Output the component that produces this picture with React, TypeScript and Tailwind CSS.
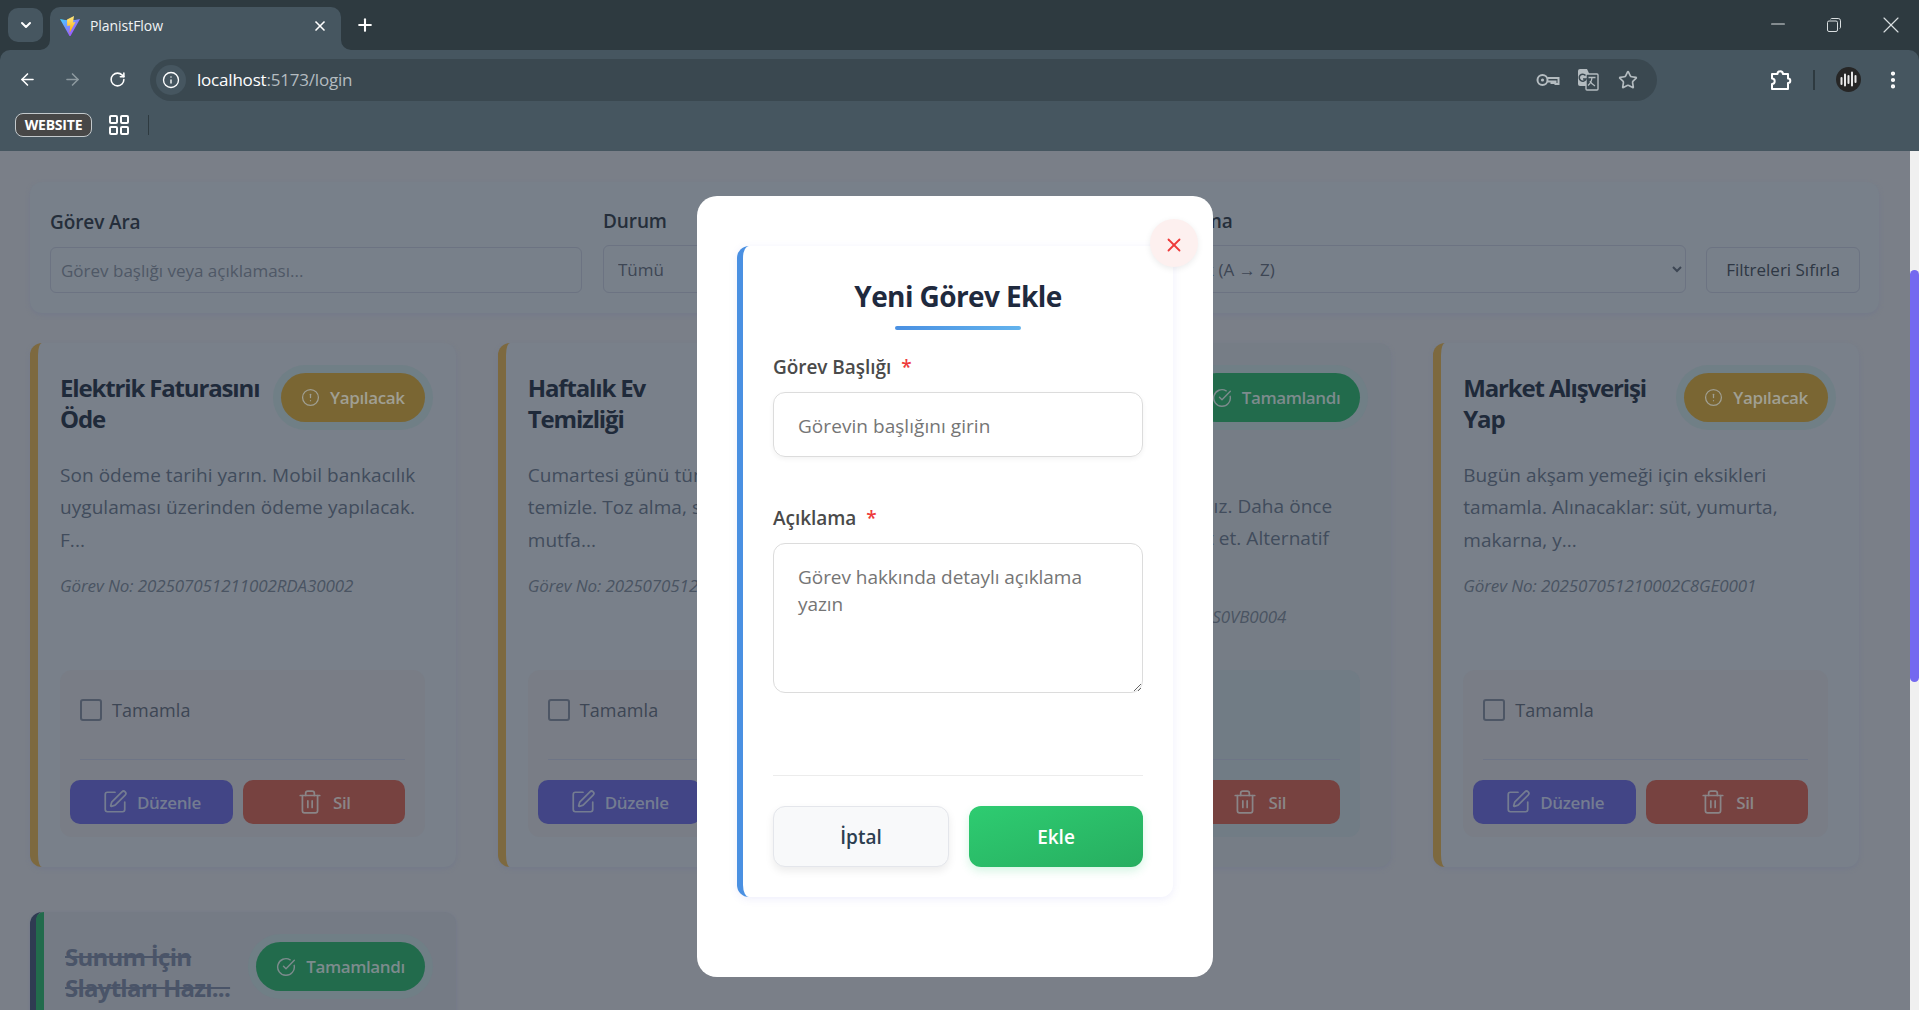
import {
  ArrowLeft,
  ArrowRight,
  ChevronDown,
  CircleAlert,
  CircleCheckBig,
  EllipsisVertical,
  Info,
  LayoutGrid,
  Minus,
  Plus,
  RotateCw,
  SquarePen,
  Star,
  Trash2,
  X,
} from "lucide-react";
import type { ReactNode } from "react";

type Task = {
  title: ReactNode;
  desc: ReactNode;
  no: string;
  done?: boolean;
};

const tasks: Task[] = [
  {
    title: (
      <>
        Elektrik Faturasını
        <br />
        Öde
      </>
    ),
    desc: (
      <>
        Son ödeme tarihi yarın. Mobil bankacılık
        <br />
        uygulaması üzerinden ödeme yapılacak.
        <br />
        F...
      </>
    ),
    no: "Görev No: 202507051211002RDA30002",
  },
  {
    title: (
      <>
        Haftalık Ev
        <br />
        Temizliği
      </>
    ),
    desc: (
      <>
        Cumartesi günü tüm evi baştan sona
        <br />
        temizle. Toz alma, süpürme ve
        <br />
        mutfa...
      </>
    ),
    no: "Görev No: 202507051211002KHT20003",
  },
  {
    title: (
      <>
        Diş Randevusu
        <br />
        İçin Klinik
        <br />
        Aranacak
      </>
    ),
    desc: (
      <>
        Randevu günü onaylayınız. Daha önce
        <br />
        Kliniği arayarak gün teyit et. Alternatif
        <br />
        gün...
      </>
    ),
    no: "Görev No: 202507051211002S0VB0004",
    done: true,
  },
  {
    title: (
      <>
        Market Alışverişi
        <br />
        Yap
      </>
    ),
    desc: (
      <>
        Bugün akşam yemeği için eksikleri
        <br />
        tamamla. Alınacaklar: süt, yumurta,
        <br />
        makarna, y...
      </>
    ),
    no: "Görev No: 202507051210002C8GE0001",
  },
];

function ViteLogo() {
  return (
    <svg width="20" height="20" viewBox="0 0 20 20">
      <defs>
        <linearGradient id="vite-a" x1="0" y1="0" x2="1" y2="1">
          <stop offset="0" stopColor="#41d1ff" />
          <stop offset="1" stopColor="#bd34fe" />
        </linearGradient>
        <linearGradient id="vite-b" x1="0" y1="0" x2="0" y2="1">
          <stop offset="0" stopColor="#ffea83" />
          <stop offset="1" stopColor="#ffa800" />
        </linearGradient>
      </defs>
      <path d="M0 3Q10 5.500 20 3L10.500 20H9.500Z" fill="url(#vite-a)" />
      <path d="M7 3.500 14 0 13 6.500 15.500 6 9.500 17 10.200 9.500 7.200 10Z" fill="url(#vite-b)" />
    </svg>
  );
}

function KeyIcon() {
  return (
    <svg width="24" height="14" viewBox="0 0 24 14" fill="none" stroke="#b4bcc0" strokeWidth="2">
      <circle cx="6.500" cy="7" r="5" />
      <circle cx="6.500" cy="7" r="1.600" fill="#b4bcc0" stroke="none" />
      <path d="M11.500 5h11v6h-3V8.500h-2V10h-2V8.500h-4" />
    </svg>
  );
}

function TranslateIcon() {
  return (
    <svg width="22" height="22" viewBox="0 0 22 22">
      <path d="M1 2a2 2 0 0 1 2-2h7l8 17H3a2 2 0 0 1-2-2Z" fill="#b4bcc0" />
      <rect x="9" y="5" width="12" height="16" rx="1" fill="#3a4850" stroke="#b4bcc0" strokeWidth="1.400" />
      <path d="M11.500 8.500h7M15 8.500c-.3 3-1.700 6-4 8M13 12c.9 2 2.500 3.600 5 5" fill="none" stroke="#b4bcc0" strokeWidth="1.300" />
      <path d="M8.500 6.500a3.500 3.500 0 1 0 .5 3.500H6" fill="none" stroke="#3a4850" strokeWidth="1.500" />
    </svg>
  );
}

function RestoreIcon() {
  return (
    <svg width="14" height="14" viewBox="0 0 14 14" fill="none" stroke="#d9dee0" strokeWidth="1">
      <rect x="0.500" y="3" width="10" height="10.500" rx="1.500" />
      <path d="M3.500 1.200c.3-.4.700-.7 1.200-.7h6.500a2.300 2.300 0 0 1 2.300 2.300v6.500c0 .5-.3.900-.7 1.200" />
    </svg>
  );
}

function ExtensionIcon() {
  return (
    <svg width="22" height="22" viewBox="0 0 22 22" fill="none" stroke="white" strokeWidth="2" strokeLinejoin="round">
      <path d="M2 5h5.500a2.700 2.700 0 0 1 5.400 0H18v4.500a2.300 2.300 0 0 1 0 4.600V20H2v-5a2.600 2.600 0 0 0 0-5.400Z" />
    </svg>
  );
}

function Avatar() {
  return (
    <svg width="25" height="25" viewBox="0 0 25 25">
      <circle cx="12.500" cy="12.500" r="12.500" fill="#262626" />
      <path
        d="M5.500 11v6M9 7.500v11M12.500 9v7M16 5.500v13M19.500 9v6"
        stroke="#e8e8e8"
        strokeWidth="2"
        strokeLinecap="round"
      />
    </svg>
  );
}

function TabFlare({ side }: { side: "left" | "right" }) {
  return (
    <svg
      width="10"
      height="10"
      viewBox="0 0 10 10"
      className={side === "left" ? "absolute bottom-0 -left-[10px]" : "absolute bottom-0 -right-[10px]"}
    >
      <path d={side === "left" ? "M0 10A10 10 0 0 0 10 0V10Z" : "M10 10A10 10 0 0 1 0 0V10Z"} fill="#465660" />
    </svg>
  );
}

function BrowserChrome() {
  return (
    <header className="shrink-0 bg-[#2e3a40] font-['Open_Sans',sans-serif] text-white">
      <div className="flex h-[50px] items-start pl-[8px]">
        <div className="mt-[8px] flex h-[34px] w-[35px] items-center justify-center rounded-[10px] bg-[#465660]">
          <ChevronDown size={16} strokeWidth={3} />
        </div>
        <div className="relative mt-[7px] ml-[7px] flex h-[43px] w-[291px] items-center rounded-t-[10px] bg-[#465660] pb-[5px] pl-[10px]">
          <TabFlare side="left" />
          <ViteLogo />
          <span className="mb-[1px] ml-[10px] text-[14px] tracking-[-0.05px] text-[#f0f3f4]">PlanistFlow</span>
          <X size={16} strokeWidth={2.5} className="ml-auto mr-[13px]" />
          <TabFlare side="right" />
        </div>
        <Plus size={20} strokeWidth={2.5} className="mt-[15px] ml-[14px]" />
        <div className="ml-auto flex items-center pt-[11px] pr-[14px] text-[#d9dee0]">
          <Minus size={22} strokeWidth={1.1} className="mr-[38px] -translate-y-[1px]" />
          <RestoreIcon />
          <X size={28} strokeWidth={1} className="ml-[36px]" />
        </div>
      </div>

      <div className="rounded-t-[10px] bg-[#465660]">
        <div className="flex h-[51px] items-center pt-[8px] pl-[18px]">
          <ArrowLeft size={19} strokeWidth={2} />
          <ArrowRight size={19} strokeWidth={2} className="ml-[26px] text-[#8d999f]" />
          <RotateCw size={17} strokeWidth={2.2} className="ml-[27px]" />
          <div className="ml-[24px] flex h-[42px] w-[1507px] items-center rounded-full bg-[#3a4850] pl-[6px]">
            <div className="flex h-[30px] w-[30px] items-center justify-center rounded-full bg-[#465660]">
              <Info size={18} strokeWidth={1.8} />
            </div>
            <span className="ml-[11px] text-[17px] tracking-[-0.2px]">
              localhost<span className="text-[#b4bcc0]">:5173/login</span>
            </span>
            <div className="ml-auto flex items-center text-[#b4bcc0]">
              <KeyIcon />
              <div className="ml-[17px]">
                <TranslateIcon />
              </div>
              <Star size={20} strokeWidth={2} className="mr-[19px] ml-[19px]" />
            </div>
          </div>
          <div className="ml-[113px]">
            <ExtensionIcon />
          </div>
          <div className="ml-[21px] h-[20px] w-[2px] bg-[#2e3a40]" />
          <div className="ml-[21px]">
            <Avatar />
          </div>
          <EllipsisVertical size={22} strokeWidth={2.6} className="ml-[21px]" />
        </div>
        <div className="flex h-[50px] items-center pb-[2px] pl-[15px]">
          <span className="flex h-[24px] w-[77px] items-center justify-center rounded-[8px] border-[1.5px] border-[#c3c9cc] bg-[#474747] pb-[1px] text-[14px] font-bold tracking-[-0.2px]">
            WEBSITE
          </span>
          <LayoutGrid size={24} strokeWidth={2} className="ml-[15px]" />
          <div className="ml-[17px] h-[20px] w-[1px] bg-[#2e3a40]" />
        </div>
      </div>
    </header>
  );
}

function TaskCard({ task, clip }: { task: Task; clip?: boolean }) {
  const badge = task.done ? (
    <span className="flex h-[49px] shrink-0 items-center gap-[10px] rounded-full bg-[#226b4c] px-[20px] text-[17px] font-semibold tracking-[-0.4px] text-[#7d8b8d] shadow-[0_0_0_8px_#707f86]">
      <CircleCheckBig size={20} strokeWidth={1.7} />
      Tamamlandı
    </span>
  ) : (
    <span className="flex h-[49px] shrink-0 items-center gap-[10px] rounded-full bg-[#7a6633] px-[20px] text-[17px] font-semibold tracking-[-0.35px] text-[#a09f92] shadow-[0_0_0_8px_#707f86]">
      <CircleAlert size={19} strokeWidth={1.6} />
      Yapılacak
    </span>
  );

  return (
    <article
      className={
        clip
          ? "flex h-[524px] flex-col rounded-[12px] border-l-[6px] border-[#2f3b52] bg-[#757b85] shadow-[0_1px_3px_#70768a]"
          : task.done
            ? "flex h-[524px] flex-col rounded-[12px] border-l-[8px] border-[#226b4c] bg-[#767d86] pt-[30px] pr-[31px] pb-[30px] pl-[22px] shadow-[0_2px_4px_#747a8a]"
            : "flex h-[524px] flex-col rounded-[12px] border-l-[8px] border-[#7d693f] bg-[#79808a] pt-[30px] pr-[31px] pb-[30px] pl-[22px] shadow-[0_2px_4px_#747a8a]"
      }
    >
      {clip ? (
        <div className="flex h-full flex-col rounded-l-[8px] border-l-[8px] border-[#226b4c] pt-[30px] pr-[31px] pl-[21px]">
          <div className="flex items-start justify-between">
            <h3 className="-mt-[1px] text-[24px] leading-[31px] font-bold tracking-[-0.75px] text-[#4a5468] line-through">
              {task.title}
            </h3>
            {badge}
          </div>
        </div>
      ) : (
        <>
          <div className="flex items-start justify-between">
            <h3 className="-mt-[1px] text-[24px] leading-[31px] font-bold tracking-[-1.15px] text-[#1f2a3a]">
              {task.title}
            </h3>
            {badge}
          </div>
          <p className="mt-[25px] text-[19px] leading-[32.4px] tracking-[0.05px] text-[#414c5c]">{task.desc}</p>
          <p className="mt-[18px] text-[17px] leading-[24px] tracking-[-0.1px] text-[#4a5462] italic">{task.no}</p>
          <div
            className={
              task.done
                ? "mt-auto h-[167px] rounded-[12px] bg-[#717c85] px-[20px] pt-[28px]"
                : "mt-auto h-[167px] rounded-[12px] bg-[#797d86] px-[20px] pt-[28px]"
            }
          >
            <label className="flex h-[24px] items-center gap-[10px] text-[18px] tracking-[0.1px] text-[#3d4654]">
              <input
                type="checkbox"
                className="h-[22px] w-[22px] appearance-none rounded-[3px] border-2 border-[#4d5665]"
              />
              Tamamla
            </label>
            <div className="mt-[37px] h-[1px] bg-[#6e7586]" />
            <div className="mt-[20px] -ml-[10px] flex gap-[10px]">
              <button className="flex h-[44px] w-[163px] items-center justify-center gap-[9px] rounded-[10px] bg-[#424586] text-[17px] font-semibold tracking-[-0.4px] text-[#747c91]">
                <SquarePen size={26} strokeWidth={1.6} />
                <span className="pt-[2px]">Düzenle</span>
              </button>
              <button className="flex h-[44px] w-[162px] items-center justify-center gap-[10px] rounded-[10px] bg-[#774240] text-[17px] font-semibold tracking-[-0.4px] text-[#8a8587]">
                <Trash2 size={26} strokeWidth={1.6} />
                <span className="pt-[2px]">Sil</span>
              </button>
            </div>
          </div>
        </>
      )}
    </article>
  );
}

function Filters() {
  return (
    <section className="flex h-[131px] items-end rounded-[12px] bg-[#78808a] pr-[19px] pb-[20px] pl-[20px] shadow-[0_2px_4px_#747a8a]">
      <div className="w-[532px]">
        <label className="block text-[19px] leading-[24px] font-semibold tracking-[-0.1px] text-[#252e3a]">
          Görev Ara
        </label>
        <input
          placeholder="Görev başlığı veya açıklaması..."
          className="mt-[13px] h-[46px] w-full rounded-[6px] border border-[#6c7382] bg-transparent px-[10px] text-[17px] placeholder:text-[#4f5866]"
        />
      </div>
      <div className="ml-[21px] w-[529px]">
        <label className="block text-[19px] leading-[24px] font-semibold tracking-[-0.1px] text-[#252e3a]">
          Durum
        </label>
        <select className="mt-[12px] h-[48px] w-full rounded-[6px] border border-[#6c7382] bg-transparent px-[10px] text-[17px] text-[#3d4654]">
          <option>Tümü</option>
        </select>
      </div>
      <div className="ml-[21px] w-[533px]">
        <label className="block text-[19px] leading-[24px] font-semibold tracking-[-0.1px] text-[#252e3a]">
          Sıralama
        </label>
        <select className="mt-[12px] h-[48px] w-full rounded-[6px] border border-[#6c7382] bg-transparent pr-[12px] pl-[10px] text-[17px] text-[#3d4654]">
          <option>Başlık (A → Z)</option>
        </select>
      </div>
      <button className="ml-[20px] h-[46px] w-[154px] rounded-[6px] border border-[#6c7382] text-[17px] text-[#2e3744]">
        Filtreleri Sıfırla
      </button>
    </section>
  );
}

function AddTaskModal() {
  return (
    <div className="absolute inset-0 flex justify-center pt-[45px]">
      <div className="relative h-[781px] w-[516px] rounded-[20px] bg-white px-[40px] pt-[50px]">
        <button className="absolute top-[23px] right-[15px] flex h-[48px] w-[48px] items-center justify-center rounded-full bg-[#fdf0ef] pt-[4px] text-[#ee3b3b] shadow-[0_2px_6px_rgba(0,0,0,0.08)]">
          <X size={22} strokeWidth={2} />
        </button>
        <form className="h-[651px] rounded-[12px] border-l-[6px] border-[#4a90e2] bg-white px-[30px] pt-[32px] shadow-[0_2px_8px_rgba(90,90,220,0.1)]">
          <h2 className="text-center text-[28px] leading-[36px] font-bold tracking-[-0.6px] text-[#1f2a3e]">
            Yeni Görev Ekle
          </h2>
          <div className="mx-auto mt-[12px] h-[4px] w-[126px] rounded-full bg-gradient-to-r from-[#4a90e2] to-[#63b3ed]" />
          <label className="mt-[25px] block text-[19px] leading-[24px] font-semibold tracking-[-0.05px] text-[#4a4a4a]">
            Görev Başlığı
            <span className="ml-[10px] text-[#ee3b3b]">*</span>
          </label>
          <input
            placeholder="Görevin başlığını girin"
            className="mt-[13px] h-[65px] w-full rounded-[12px] border border-[#dcdcdc] px-[24px] pt-[2px] text-[19px] tracking-[0.05px] shadow-[0_2px_5px_rgba(0,0,0,0.05)] placeholder:text-[#757575]"
          />
          <label className="mt-[49px] block text-[19px] leading-[24px] font-semibold tracking-[-0.05px] text-[#4a4a4a]">
            Açıklama
            <span className="ml-[10px] text-[#ee3b3b]">*</span>
          </label>
          <textarea
            placeholder="Görev hakkında detaylı açıklama yazın"
            className="mt-[13px] block h-[150px] w-full rounded-[12px] border border-[#dcdcdc] px-[24px] py-[20px] text-[19px] leading-[27px] tracking-[-0.05px] placeholder:text-[#757575]"
          />
          <div className="mt-[82px] h-[1px] bg-[#ececec]" />
          <div className="mt-[30px] flex gap-[20px]">
            <button
              type="button"
              className="h-[61px] flex-1 rounded-[12px] border border-[#e4e6eb] bg-[#f8f9fa] pt-[2px] text-[19px] font-semibold text-[#2c3e50] shadow-[0_4px_8px_rgba(0,0,0,0.08)]"
            >
              İptal
            </button>
            <button
              type="button"
              className="h-[61px] flex-1 rounded-[12px] bg-gradient-to-br from-[#2ecc71] to-[#27ae60] pt-[2px] text-[19px] font-semibold text-white shadow-[0_4px_10px_rgba(46,204,113,0.2)]"
            >
              Ekle
            </button>
          </div>
        </form>
      </div>
    </div>
  );
}

export default function App() {
  return (
    <div className="flex h-[1010px] flex-col overflow-hidden bg-[#7a7f88] font-['Open_Sans',sans-serif]">
      <BrowserChrome />
      <div className="flex min-h-0 flex-1">
        <main className="relative min-w-0 flex-1 overflow-hidden px-[31px] pt-[31px] pl-[30px]">
          <Filters />
          <div className="mt-[30px] mr-[20px] grid grid-cols-4 gap-x-[42px] gap-y-[45px]">
            {tasks.map((t) => (
              <TaskCard key={t.no} task={t} />
            ))}
            <TaskCard
              clip
              task={{
                title: (
                  <>
                    Sunum İçin
                    <br />
                    Slaytları Hazı...
                  </>
                ),
                desc: "",
                no: "5",
                done: true,
              }}
            />
          </div>
          <AddTaskModal />
        </main>
        <div className="w-[9px] shrink-0 bg-[#f0f0f0] pt-[119px]">
          <div className="h-[412px] rounded-full bg-[#7469f0]" />
        </div>
      </div>
    </div>
  );
}
